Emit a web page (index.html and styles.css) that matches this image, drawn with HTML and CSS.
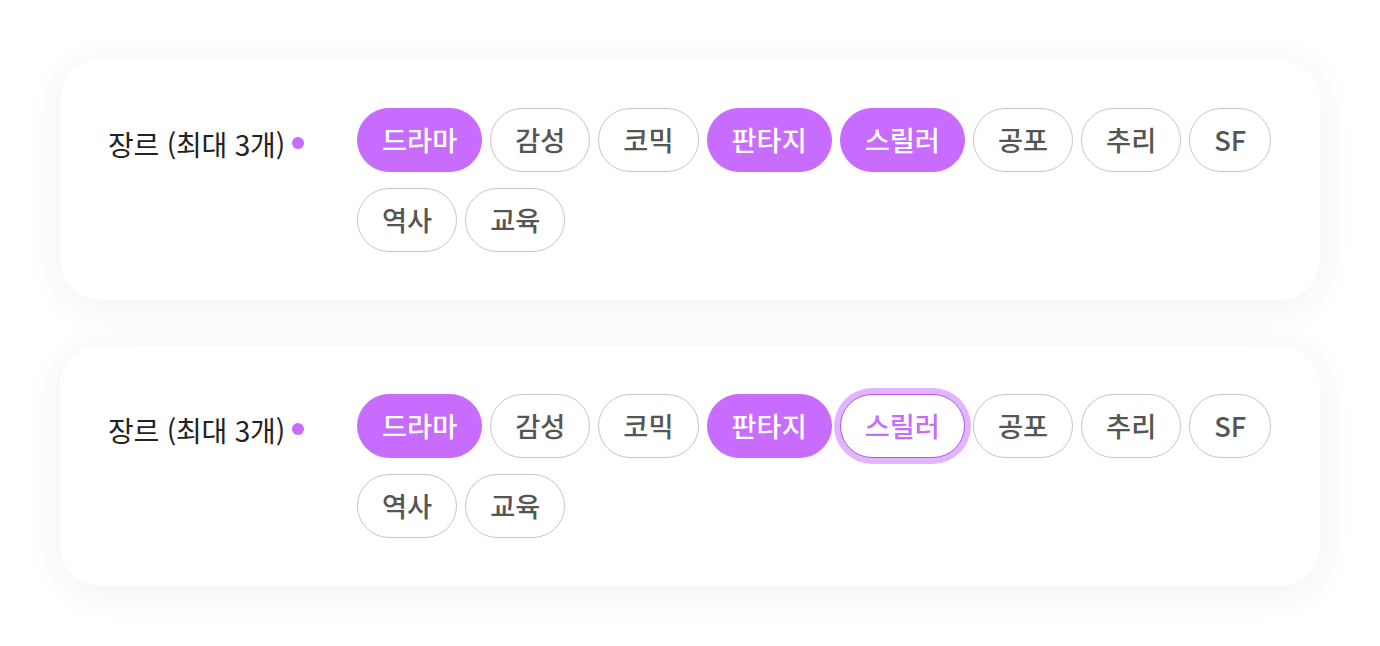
FILE: index.html
```html
<!DOCTYPE html>
<html lang="ko">
<head>
<meta charset="utf-8">
<link rel="stylesheet" href="styles.css">
</head>
<body>
<div class="page">
  <section class="card">
    <div class="label">장르 (최대 3개)<span class="dot"></span></div>
    <div class="chips">
      <button class="chip on">드라마</button>
      <button class="chip">감성</button>
      <button class="chip">코믹</button>
      <button class="chip on">판타지</button>
      <button class="chip on">스릴러</button>
      <button class="chip">공포</button>
      <button class="chip">추리</button>
      <button class="chip">SF</button>
      <button class="chip">역사</button>
      <button class="chip">교육</button>
    </div>
  </section>
  <section class="card">
    <div class="label">장르 (최대 3개)<span class="dot"></span></div>
    <div class="chips">
      <button class="chip on">드라마</button>
      <button class="chip">감성</button>
      <button class="chip">코믹</button>
      <button class="chip on">판타지</button>
      <button class="chip focus">스릴러</button>
      <button class="chip">공포</button>
      <button class="chip">추리</button>
      <button class="chip">SF</button>
      <button class="chip">역사</button>
      <button class="chip">교육</button>
    </div>
  </section>
</div>
</body>
</html>
```

FILE: styles.css
```css
html, body {
  margin: 0;
  padding: 0;
  background: #ffffff;
}
body {
  font-family: "Noto Sans CJK KR", "Noto Sans", sans-serif;
}
.page {
  display: flex;
  flex-direction: column;
  gap: 46px;
  padding: 60px;
}
.card {
  background: #ffffff;
  border-radius: 40px;
  box-shadow: 0 6px 40px rgba(0, 0, 0, 0.055);
  padding: 48px 40px 48px 48px;
  display: flex;
  align-items: flex-start;
  height: 240px;
  box-sizing: border-box;
}
.label {
  width: 249px;
  flex: none;
  height: 64px;
  display: flex;
  align-items: center;
  font-size: 28px;
  color: #222222;
  padding-top: 8px;
  box-sizing: border-box;
  letter-spacing: -0.2px;
}
.dot {
  display: inline-block;
  width: 12px;
  height: 12px;
  border-radius: 50%;
  background: #c86bff;
  margin-left: 7px;
  margin-top: -3px;
}
.chips {
  flex: 1;
  display: flex;
  flex-wrap: wrap;
  gap: 16px 8px;
  max-width: 925px;
}
.chip {
  font-family: inherit;
  font-size: 27.25px;
  font-weight: 500;
  height: 64px;
  padding: 0 24px;
  border: 1px solid #c6c6c6;
  border-radius: 32px;
  background: #ffffff;
  color: #555555;
  line-height: 1;
  cursor: pointer;
}
.chip.on {
  background: #c86bff;
  border-color: #c86bff;
  color: #ffffff;
}
.chip.focus {
  border-color: #b456e8;
  color: #c86bff;
  box-shadow: 0 0 0 6px #e3b4ff;
}
```
